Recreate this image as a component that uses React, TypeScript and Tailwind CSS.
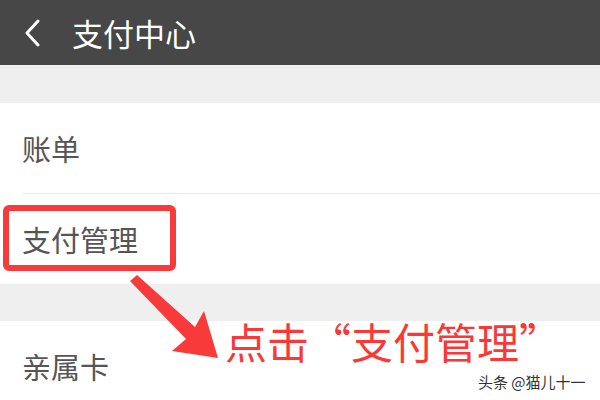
import React from "react";

export default function App() {
  const font = { fontFamily: '"Noto Sans CJK SC", "Noto Sans", sans-serif' };
  return (
    <div className="relative w-[600px] h-[400px] overflow-hidden bg-white" style={font}>
      <div className="h-[65px] bg-[#474747] flex items-center">
        <svg width="22" height="28" viewBox="0 0 22 28" className="ml-[22px]">
          <path d="M16 2 L5 14 L16 26" fill="none" stroke="#ffffff" strokeWidth="3" strokeLinecap="round" strokeLinejoin="round" />
        </svg>
        <span className="ml-[28px] text-[31px] leading-none text-white">支付中心</span>
      </div>
      <div className="h-[38px] bg-[#efefef]" />
      <div className="bg-white">
        <div className="h-[90px] flex items-center pl-[22px] text-[29px] leading-none text-[#555555]">账单</div>
        <div className="ml-[22px] h-px bg-[#ececec]" />
        <div className="h-[90px] flex items-center pl-[22px] text-[29px] leading-none text-[#555555]">支付管理</div>
      </div>
      <div className="h-[37px] bg-[#efefef]" />
      <div className="h-[90px] flex items-center pl-[22px] text-[29px] leading-none text-[#555555]">亲属卡</div>

      <div className="absolute left-[3px] top-[205px] w-[173px] h-[66px] border-[6px] border-[#f83a3a] rounded-[6px]" />
      <svg className="absolute left-0 top-0" width="600" height="400" viewBox="0 0 600 400">
        <polygon points="137,275 195,327 204,311 218,358 172,351 186,339 130,281" fill="#f83a3a" />
      </svg>
      <div className="absolute left-[225px] top-[320px] text-[42px] leading-none text-[#fb3737] whitespace-nowrap">点击“支付管理”</div>
      <div className="absolute left-[478px] top-[374px] text-[15px] leading-none text-[#333333] whitespace-nowrap">头条 @猫儿十一</div>
    </div>
  );
}
